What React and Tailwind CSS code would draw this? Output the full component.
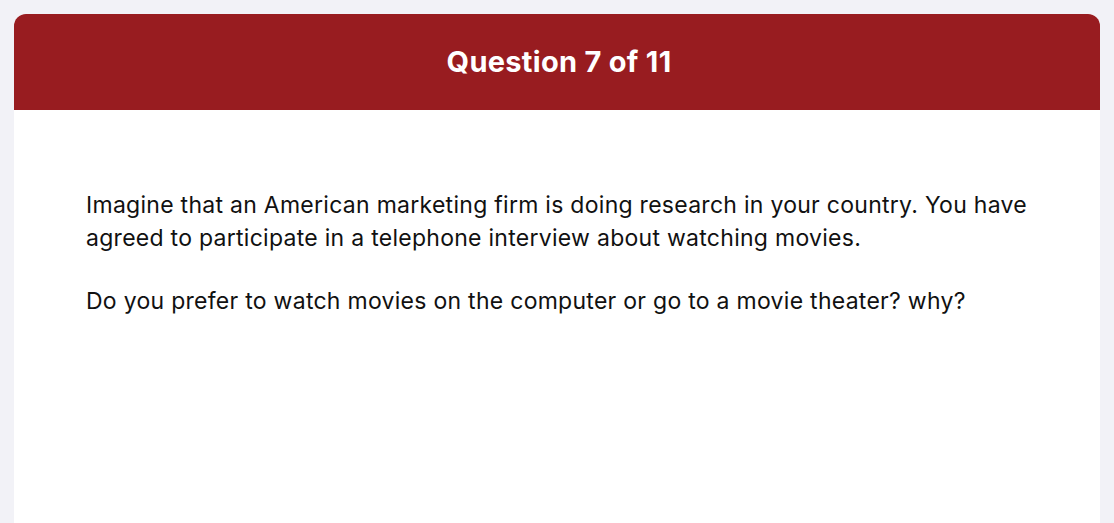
export default function App() {
  return (
    <div className="min-h-screen bg-[#f2f2f7] px-[14px] pt-[14px] font-['Inter',sans-serif] overflow-hidden h-[523px]">
      <div className="rounded-t-[12px] overflow-hidden bg-white h-[600px]">
        <header className="h-[96px] bg-[#981c20] flex items-center justify-center">
          <h1 className="text-white text-[29px] font-bold tracking-[0.01em] pl-[4px]">Question 7 of 11</h1>
        </header>
        <main className="pl-[72px] pr-[56px] pt-[79px] text-[23px] leading-[33px] text-[#111] tracking-[0.012em]">
          <p>
            Imagine that an American marketing firm is doing research in your country. You have agreed to participate in a telephone interview about watching movies.
          </p>
          <p className="mt-[30px]">Do you prefer to watch movies on the computer or go to a movie theater? why?</p>
        </main>
      </div>
    </div>
  )
}
